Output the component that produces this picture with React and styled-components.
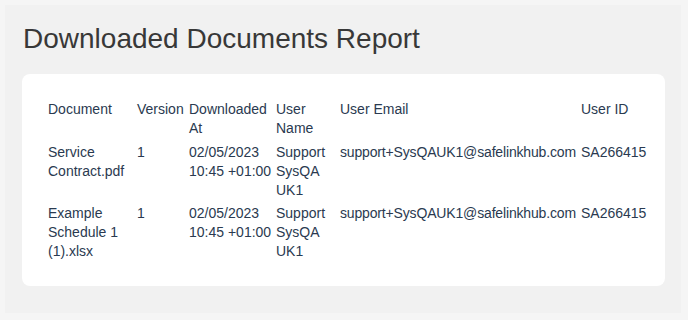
import React from "react";
import styled, { createGlobalStyle } from "styled-components";

const Global = createGlobalStyle`
  html, body { margin: 0; padding: 0; background: #f5f5f5; }
  body { font-family: "Liberation Sans", Arial, sans-serif; }
`;

const Frame = styled.div`
  margin: 5px 7px 0 5px;
  height: 308px;
  background: #f1f1f1;
  padding: 0 16px 0 17px;
  box-sizing: border-box;
  overflow: hidden;
`;

const Title = styled.h1`
  margin: 0;
  padding: 17px 0 0 1px;
  height: 69px;
  box-sizing: border-box;
  font-family: "Liberation Sans", Arial, sans-serif;
  font-weight: 400;
  font-size: 28px;
  line-height: 34px;
  color: #383838;
  letter-spacing: 0;
`;

const Card = styled.div`
  background: #ffffff;
  border-radius: 8px;
  height: 212px;
  padding: 26px 20px 0 26px;
  box-sizing: border-box;
`;

const Table = styled.table`
  border-collapse: collapse;
  table-layout: fixed;
  width: 100%;
  font-size: 14px;
  line-height: 19px;
  color: #2a3a50;
`;

const Th = styled.th`
  text-align: left;
  font-weight: 400;
  vertical-align: top;
  padding: 0 4px 3px 0;
`;

const Td = styled.td`
  vertical-align: top;
  padding: 2px 4px 2px 0;
  letter-spacing: ${(p) => (p.$tight ? "-0.16px" : "0")};
  white-space: ${(p) => (p.$tight ? "nowrap" : "normal")};
`;

const cols = [89, 52, 87, 64, 241, 0];
const headers = ["Document", "Version", "Downloaded At", "User Name", "User Email", "User ID"];
const rows = [
  ["Service Contract.pdf", "1", "02/05/2023 10:45 +01:00", "Support SysQA UK1", "support+SysQAUK1@safelinkhub.com", "SA266415"],
  ["Example Schedule 1 (1).xlsx", "1", "02/05/2023 10:45 +01:00", "Support SysQA UK1", "support+SysQAUK1@safelinkhub.com", "SA266415"],
];

export default function App() {
  return (
    <>
      <Global />
      <Frame>
        <Title>Downloaded Documents Report</Title>
        <Card>
          <Table>
            <colgroup>
              {cols.map((w, i) => (
                <col key={i} style={w ? { width: w } : undefined} />
              ))}
            </colgroup>
            <thead>
              <tr>
                {headers.map((h) => (
                  <Th key={h}>{h}</Th>
                ))}
              </tr>
            </thead>
            <tbody>
              {rows.map((r, i) => (
                <tr key={i}>
                  {r.map((c, j) => (
                    <Td key={j} $tight={j === 4}>{c}</Td>
                  ))}
                </tr>
              ))}
            </tbody>
          </Table>
        </Card>
      </Frame>
    </>
  );
}
